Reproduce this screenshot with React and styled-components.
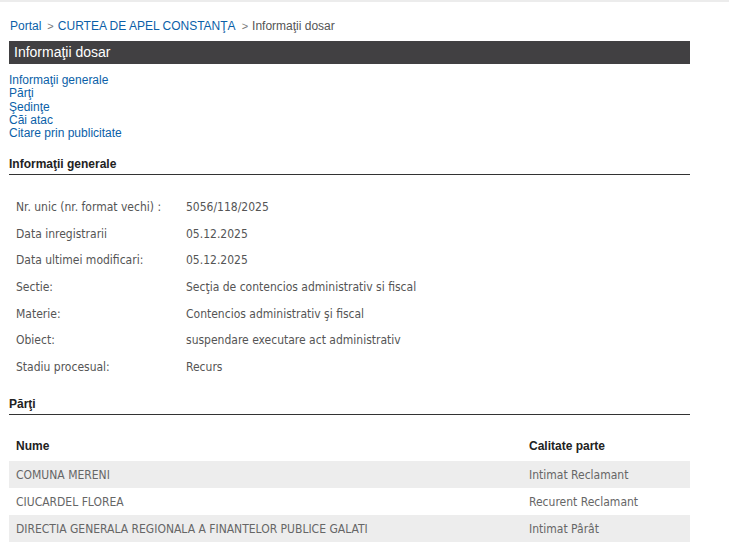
import React from "react";
import styled, { createGlobalStyle } from "styled-components";

const GlobalStyle = createGlobalStyle`
  html, body {
    margin: 0;
    padding: 0;
    background: #fff;
  }
  body {
    border-top: 2px solid #ececec;
    font-family: "Liberation Sans", Arial, sans-serif;
  }
`;

const generalInfo = [
  ["Nr. unic (nr. format vechi) :", "5056/118/2025"],
  ["Data inregistrarii", "05.12.2025"],
  ["Data ultimei modificari:", "05.12.2025"],
  ["Sectie:", "Secţia de contencios administrativ si fiscal"],
  ["Materie:", "Contencios administrativ şi fiscal"],
  ["Obiect:", "suspendare executare act administrativ"],
  ["Stadiu procesual:", "Recurs"],
];

const parti = [
  ["COMUNA MERENI", "Intimat Reclamant"],
  ["CIUCARDEL FLOREA", "Recurent Reclamant"],
  ["DIRECTIA GENERALA REGIONALA A FINANTELOR PUBLICE GALATI", "Intimat Pârât"],
];

const App = () => {
  return (
    <Page>
      <GlobalStyle />
      <Breadcrumb>
        <Crumb href="#">Portal</Crumb>
        <Sep>&gt;</Sep>
        <Crumb href="#">CURTEA DE APEL CONSTANŢA</Crumb>
        <Sep>&gt;</Sep>
        <Current>Informaţii dosar</Current>
      </Breadcrumb>

      <TitleBar>Informaţii dosar</TitleBar>

      <Nav>
        <NavLink href="#">Informaţii generale</NavLink>
        <NavLink href="#">Părţi</NavLink>
        <NavLink href="#">Şedinţe</NavLink>
        <NavLink href="#">Căi atac</NavLink>
        <NavLink href="#">Citare prin publicitate</NavLink>
      </Nav>

      <SectionTitle $gap="17px">Informaţii generale</SectionTitle>
      <InfoTable>
        <tbody>
          {generalInfo.map(([label, value]) => (
            <tr key={label}>
              <InfoLabel>{label}</InfoLabel>
              <InfoCell>{value}</InfoCell>
            </tr>
          ))}
        </tbody>
      </InfoTable>

      <SectionTitle $gap="17px">Părţi</SectionTitle>
      <PartiTable>
        <thead>
          <tr>
            <HeadCell>Nume</HeadCell>
            <HeadCell $width="161px">Calitate parte</HeadCell>
          </tr>
        </thead>
        <tbody>
          {parti.map(([nume, calitate], i) => (
            <PartRow key={nume} $shaded={i % 2 === 0}>
              <PartCell>{nume}</PartCell>
              <PartCell>{calitate}</PartCell>
            </PartRow>
          ))}
        </tbody>
      </PartiTable>
    </Page>
  );
};

const Page = styled.div`
  width: 681px;
  padding: 17px 0 20px 9px;
`;

const Breadcrumb = styled.div`
  display: flex;
  align-items: center;
  gap: 4px;
  font-size: 12px;
  line-height: 14px;
  padding-left: 1px;
  margin-bottom: 8px;
`;

const Crumb = styled.a`
  color: #0b5fa8;
  text-decoration: none;
`;

const Sep = styled.span`
  color: #777;
  font-size: 11px;
  margin-left: 2px;
`;

const Current = styled.span`
  color: #555;
`;

const TitleBar = styled.div`
  background: #414042;
  color: #fff;
  font-size: 14px;
  height: 23px;
  line-height: 22px;
  padding-left: 5px;
`;

const Nav = styled.div`
  display: flex;
  flex-direction: column;
  margin-top: 10px;
`;

const NavLink = styled.a`
  color: #0b5fa8;
  text-decoration: none;
  font-size: 12px;
  line-height: 13.3px;
`;

const SectionTitle = styled.div`
  font-size: 12px;
  font-weight: bold;
  color: #222;
  line-height: 14px;
  padding-bottom: 3px;
  border-bottom: 1px solid #333;
  margin-top: ${(props) => props.$gap || "18px"};
`;

const InfoTable = styled.table`
  width: 100%;
  border-collapse: collapse;
  margin-top: 18px;
  font-family: "DejaVu Sans Condensed", "DejaVu Sans", sans-serif;
  font-stretch: condensed;
  font-size: 12px;
  color: #555;
`;

const InfoLabel = styled.td`
  width: 170px;
  height: 26.7px;
  padding: 0 0 0 7px;
  vertical-align: middle;
`;

const InfoCell = styled.td`
  height: 26.7px;
  padding: 0;
  vertical-align: middle;
`;

const PartiTable = styled.table`
  width: 100%;
  border-collapse: collapse;
  margin-top: 17px;
`;

const HeadCell = styled.th`
  text-align: left;
  font-size: 12px;
  font-weight: bold;
  color: #222;
  height: 27px;
  padding: 0 0 2px 7px;
  width: ${(props) => props.$width || "auto"};
`;

const PartRow = styled.tr`
  background: ${(props) => (props.$shaded ? "#ededed" : "#fff")};
`;

const PartCell = styled.td`
  height: 27px;
  padding: 0 0 0 7px;
  font-family: "DejaVu Sans Condensed", "DejaVu Sans", sans-serif;
  font-stretch: condensed;
  font-size: 12px;
  color: #666;
`;

export default App;
